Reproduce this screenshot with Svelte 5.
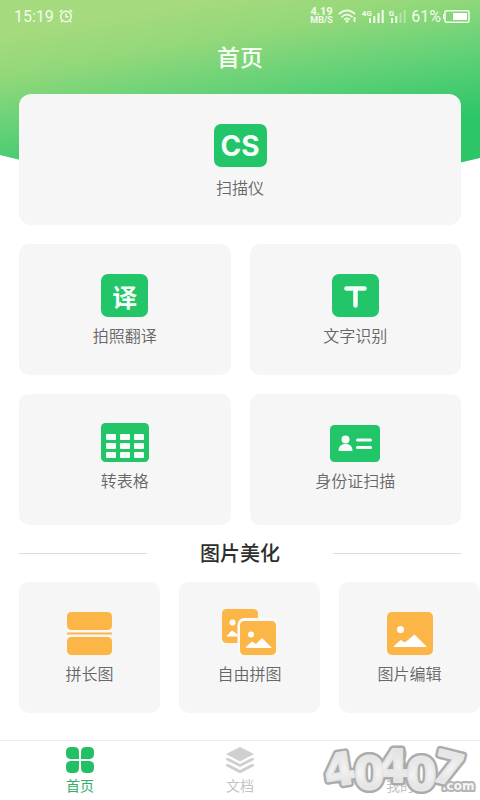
<script>
  const pairs = [
    [
      { icon: 'translate', label: '拍照翻译' },
      { icon: 'text', label: '文字识别' }
    ],
    [
      { icon: 'table', label: '转表格' },
      { icon: 'idcard', label: '身份证扫描' }
    ]
  ];
  const beautify = [
    { icon: 'long', label: '拼长图' },
    { icon: 'collage', label: '自由拼图' },
    { icon: 'edit', label: '图片编辑' }
  ];
  const tabs = [
    { icon: 'home', label: '首页', active: true },
    { icon: 'docs', label: '文档' },
    { icon: 'me', label: '我的' }
  ];
  const cells = [0, 1, 2].flatMap((r) => [0, 1, 2].map((c) => ({ x: 5 + c * 14, y: 11 + r * 9 })));
</script>

{#snippet icon(name)}
  {#if name === 'scan'}
    <span class="badge wide">CS</span>
  {:else if name === 'translate'}
    <span class="badge">译</span>
  {:else if name === 'text'}
    <svg width="47" height="43" viewBox="0 0 47 43" aria-hidden="true">
      <rect width="47" height="43" rx="7" fill="#22c567" />
      <path d="M14.500 14.500H32.500M23.500 14.500V31.500" stroke="#f4fdf7" stroke-width="4.600" stroke-linecap="round" />
    </svg>
  {:else if name === 'table'}
    <svg width="48" height="39" viewBox="0 0 48 39" aria-hidden="true">
      <rect width="48" height="39" rx="4.500" fill="#22c567" />
      {#each cells as c}
        <rect x={c.x} y={c.y} width="10" height="6" rx="1" fill="#f6fdf9" />
      {/each}
    </svg>
  {:else if name === 'idcard'}
    <svg width="50" height="37" viewBox="0 0 50 37" aria-hidden="true">
      <rect width="50" height="37" rx="4.500" fill="#22c567" />
      <circle cx="15.500" cy="14.500" r="4" fill="#f6fdf9" />
      <path d="M8.500 26C8.500 21.500 11 19 15.500 19S22.500 21.500 22.500 26Z" fill="#f6fdf9" />
      <path d="M27.500 15H40.500M27.500 22.500H40.500" stroke="#f6fdf9" stroke-width="3" stroke-linecap="round" />
    </svg>
  {:else if name === 'long'}
    <svg width="45" height="43" viewBox="0 0 45 43" aria-hidden="true">
      <g fill="#fcb648">
        <rect width="45" height="18" rx="4.500" />
        <rect y="20.500" width="45" height="2" rx="0.500" />
        <rect y="25" width="45" height="18" rx="4.500" />
      </g>
    </svg>
  {:else if name === 'collage'}
    <svg width="55" height="46" viewBox="0 0 55 46" aria-hidden="true">
      <rect width="36" height="34" rx="4.500" fill="#fcb648" />
      <circle cx="10.500" cy="13.500" r="3" fill="#fff" />
      <path d="M5 27L10 22L17 27Z" fill="#fff" stroke="#fff" stroke-linejoin="round" />
      <rect x="15.500" y="9" width="44" height="42" rx="7" fill="#fafafa" />
      <rect x="18" y="12" width="36" height="34" rx="4.500" fill="#fcb648" />
      <circle cx="29" cy="25.500" r="3" fill="#fff" />
      <path d="M24 38.500L30 33L34 35.500L40 29.500L49 38.500Z" fill="#fff" stroke="#fff" stroke-linejoin="round" />
    </svg>
  {:else if name === 'edit'}
    <svg width="46" height="43" viewBox="0 0 46 43" aria-hidden="true">
      <rect width="46" height="43" rx="5" fill="#fcb648" />
      <circle cx="13.500" cy="17.500" r="3.500" fill="#fff" />
      <path d="M7 34.500L13.500 28.500L18 31L27.500 23L39 34.500Z" fill="#fff" stroke="#fff" stroke-linejoin="round" />
    </svg>
  {:else if name === 'home'}
    <svg width="28" height="26" viewBox="0 0 28 26" fill="#22c064" aria-hidden="true">
      <path d="M5 0H8Q13 0 13 5V12H5Q0 12 0 7V5Q0 0 5 0Z" />
      <path d="M20 0H23Q28 0 28 5V7Q28 12 23 12H15V5Q15 0 20 0Z" />
      <path d="M5 14H13V21Q13 26 8 26H5Q0 26 0 21V19Q0 14 5 14Z" />
      <path d="M15 14H23Q28 14 28 19V21Q28 26 23 26H20Q15 26 15 21Z" />
    </svg>
  {:else if name === 'docs'}
    <svg width="28" height="26" viewBox="0 0 28 26" fill="#cfcfcf" aria-hidden="true">
      <path d="M14 0L28 7L14 14.500L0 7Z" />
      <path d="M0 11.500L2.500 11L14 17L25.500 11L28 11.500V13L14 20L0 13Z" />
      <path d="M0 17.500L2.500 17L14 23L25.500 17L28 17.500V19L14 26.500L0 19Z" />
    </svg>
  {:else}
    <svg width="28" height="26" viewBox="0 0 28 26" fill="#cfcfcf" aria-hidden="true">
      <circle cx="14" cy="7" r="7" />
      <path d="M1 26Q1 15 14 15T27 26Z" />
    </svg>
  {/if}
{/snippet}

{#snippet card(item)}
  <button class="card" type="button">
    <span class="icon">{@render icon(item.icon)}</span>
    <span class="label">{item.label}</span>
  </button>
{/snippet}

<div class="page">
  <svg class="backdrop" viewBox="0 0 480 190" preserveAspectRatio="none" aria-hidden="true">
    <defs>
      <linearGradient id="leaf" gradientUnits="userSpaceOnUse" x1="215" y1="0" x2="242" y2="158">
        <stop offset="0" stop-color="#a5da7e" />
        <stop offset="0.250" stop-color="#92d87a" />
        <stop offset="0.600" stop-color="#60d177" />
        <stop offset="1" stop-color="#2cc568" />
      </linearGradient>
    </defs>
    <path d="M0 0H480V158Q240 218 0 155Z" fill="url(#leaf)" />
  </svg>

  <div class="status">
    <span class="clock">15:19</span>
    <svg width="14" height="14" viewBox="0 0 14 14" fill="none" stroke="#f3fbec" stroke-width="1.400" aria-hidden="true">
      <circle cx="7" cy="7.500" r="5.300" />
      <path d="M7 4.500V7.800H9.500M0.800 3L3.300 0.900M13.200 3L10.700 0.900M3 12L1.800 13.300M11 12L12.200 13.300" />
    </svg>
    <span class="speed"><span>4.19</span><span>MB/S</span></span>
    <svg class="wifi" width="19" height="14" viewBox="0 0 19 14" fill="none" stroke="#f3fbec" stroke-width="1.700" aria-hidden="true">
      <path d="M0.800 5.200Q9 -2.500 17.200 5.200M3.500 8.200Q9 3 14.500 8.200M6.200 10.700Q9 8.200 11.800 10.700" />
      <circle cx="9" cy="12.300" r="1.400" fill="#f3fbec" stroke="none" />
      <path d="M16.500 8V13" />
    </svg>
    <span class="signal">
      <span class="net">4G</span>
      <svg width="15" height="13" viewBox="0 0 15 13" fill="#f3fbec" aria-hidden="true">
        <path d="M0 8H2V13H0ZM4.300 6H6.300V13H4.300ZM8.500 3H10.500V13H8.500ZM12.700 0H14.700V13H12.700Z" />
      </svg>
    </span>
    <span class="signal">
      <span class="net">G</span>
      <svg width="15" height="13" viewBox="0 0 15 13" fill="#f3fbec" aria-hidden="true">
        <path d="M0 8H2V13H0ZM4.300 6H6.300V13H4.300Z" />
        <path opacity="0.400" d="M8.500 3H10.500V13H8.500ZM12.700 0H14.700V13H12.700Z" />
      </svg>
    </span>
    <span class="percent">61%</span>
    <svg width="27" height="13" viewBox="0 0 27 13" aria-hidden="true">
      <rect x="2" y="0.800" width="24" height="11.400" rx="1.500" fill="none" stroke="#f3fbec" stroke-width="1.600" />
      <path d="M0 4H1.500V9H0Z" fill="#f3fbec" />
      <rect x="10" y="3" width="14" height="7" fill="#fff" />
    </svg>
  </div>

  <h1>首页</h1>

  <main>
    <div class="hero">{@render card({ icon: 'scan', label: '扫描仪' })}</div>
    {#each pairs as row, i}
      <div class="pair" class:compact={i === 1}>
        {#each row as item}{@render card(item)}{/each}
      </div>
    {/each}
    <h2>图片美化</h2>
  </main>

  <div class="trio">
    {#each beautify as item}{@render card(item)}{/each}
  </div>

  <nav>
    {#each tabs as tab}
      <a href="#{tab.icon}" class:active={tab.active}>
        {@render icon(tab.icon)}
        <span>{tab.label}</span>
      </a>
    {/each}
    <svg class="stamp" width="160" height="54" viewBox="0 0 160 54" role="img" aria-label="40407.com">
      <defs>
        <linearGradient id="silver" x1="0" y1="0" x2="0" y2="1">
          <stop offset="0" stop-color="#dcdcdc" />
          <stop offset="0.500" stop-color="#f2f2f2" />
          <stop offset="1" stop-color="#d6d6d6" />
        </linearGradient>
      </defs>
      {#each ['rim', 'face'] as layer}
        <g class={layer} aria-hidden={layer === 'rim'}>
          {#if layer === 'rim'}
            <use href="#digits" />
          {:else}
            <g id="digits">
              <text x="4" y="41" transform="rotate(-9 20 25)">4</text>
              <text x="58" y="38">4</text>
              <text x="113" y="40" transform="rotate(14 129 24)">7</text>
              <text x="34" y="45">0</text>
              <text x="86" y="46">0</text>
            </g>
          {/if}
        </g>
      {/each}
      <text class="com" x="122" y="46">.com</text>
    </svg>
  </nav>
</div>

<style>
  :global(body) {
    margin: 0;
    background: #fff;
  }
  .page {
    position: relative;
    display: flex;
    flex-direction: column;
    min-height: 100vh;
    box-sizing: border-box;
    font-family: "Noto Sans CJK SC", sans-serif;
  }
  .backdrop {
    position: absolute;
    top: 0;
    left: 0;
    width: 100%;
    height: 190px;
    z-index: -1;
  }
  .status {
    display: flex;
    align-items: center;
    height: 32px;
    padding: 0 10px 0 14px;
    color: #f3fbec;
    font-family: Roboto, sans-serif;
  }
  .status svg {
    flex: none;
  }
  .clock {
    font-size: 16px;
    margin-right: 5px;
  }
  .speed {
    display: flex;
    flex-direction: column;
    align-items: center;
    margin-left: auto;
    font-size: 9px;
    line-height: 9px;
    font-weight: 700;
  }
  .speed span:first-child {
    font-size: 11px;
  }
  .wifi {
    margin: 0 5px;
  }
  .signal {
    display: flex;
    align-items: flex-end;
    margin-right: 5px;
  }
  .net {
    font-size: 8px;
    line-height: 8px;
    font-weight: 700;
    align-self: flex-start;
    margin-right: -3px;
  }
  .percent {
    font-size: 16px;
    margin-right: 2px;
  }
  h1 {
    margin: 0;
    padding: 8px 0 22px;
    font-size: 23px;
    line-height: 32px;
    font-weight: 500;
    text-align: center;
    color: #f8fdf3;
  }
  main {
    display: flex;
    flex-direction: column;
    gap: 19px;
    padding: 0 19px;
  }
  .hero {
    display: grid;
  }
  .pair {
    display: grid;
    grid-template-columns: 1fr 1fr;
    gap: 19px;
  }
  .card {
    display: flex;
    flex-direction: column;
    align-items: center;
    gap: 6px;
    height: 131px;
    padding: 0;
    border: 0;
    border-radius: 10px;
    background: #f6f6f7;
    color: #666;
    font-family: inherit;
    font-size: 16px;
    line-height: 24px;
  }
  .hero .card {
    gap: 8px;
    border-radius: 12px;
  }
  .icon {
    display: flex;
    align-items: flex-end;
    height: 73px;
  }
  .compact .icon {
    height: 68px;
  }
  .icon svg {
    display: block;
  }
  .label {
    font-weight: 350;
  }
  .badge {
    display: flex;
    align-items: center;
    justify-content: center;
    width: 47px;
    height: 43px;
    border-radius: 7px;
    background: #22c567;
    color: #f4fdf7;
    font-size: 25px;
    font-weight: 700;
  }
  .badge.wide {
    width: 53px;
    font-family: Inter, sans-serif;
    font-size: 28px;
  }
  h2 {
    display: flex;
    align-items: center;
    justify-content: space-between;
    margin: -6px 0 0;
    padding-top: 1px;
    font-size: 20px;
    line-height: 28px;
    font-weight: 500;
    color: #2e2e2e;
  }
  h2::before,
  h2::after {
    content: "";
    width: 29%;
    height: 1px;
    background: #dcdcdc;
  }
  .trio {
    display: grid;
    grid-template-columns: repeat(3, 1fr);
    gap: 19px;
    padding: 15px 0 27px 19px;
  }
  nav {
    position: relative;
    display: grid;
    grid-template-columns: repeat(3, 1fr);
    height: 60px;
    margin-top: auto;
    box-sizing: border-box;
    border-top: 1px solid #ececec;
  }
  nav a {
    display: flex;
    flex-direction: column;
    align-items: center;
    gap: 2px;
    padding-top: 6px;
    color: #c4c4c4;
    font-size: 14px;
    line-height: 20px;
    text-decoration: none;
  }
  nav a.active {
    color: #35ad68;
  }
  .stamp {
    position: absolute;
    right: 0;
    top: 3px;
    overflow: visible;
    opacity: 0.93;
  }
  .stamp text {
    font-family: "DejaVu Sans", sans-serif;
    font-weight: 700;
    stroke-linejoin: round;
  }
  .rim {
    stroke: #a6a6a6;
    stroke-width: 7px;
    fill: #a6a6a6;
    font-size: 44px;
  }
  .face {
    stroke: #e6e6e6;
    stroke-width: 2px;
    fill: url(#silver);
    font-size: 44px;
  }
  .stamp .com {
    font-size: 12px;
    fill: #f6f6f6;
    stroke: #b0b0b0;
    stroke-width: 4px;
    paint-order: stroke;
  }
</style>
